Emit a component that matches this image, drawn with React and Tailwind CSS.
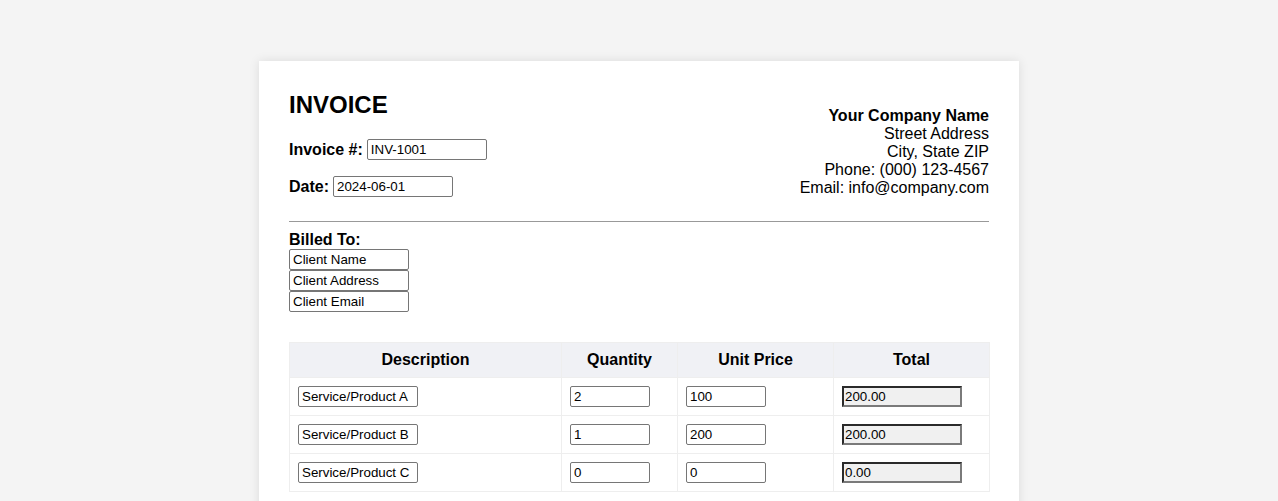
import React from "react";

const inputCls =
  "block h-[21px] border border-[#767676] rounded-[2px] bg-white px-[3px] text-[13.33px] leading-[15px] text-black outline-none";

const totalCls =
  "block h-[21px] w-[120px] border-2 border-t-[#2a2a2a] border-l-[#2a2a2a] border-b-[#7a7a7a] border-r-[#7a7a7a] bg-[#f0f0f0] px-[1px] text-[13.33px] leading-[15px] text-black outline-none";

const rows = [
  { d: "Service/Product A", q: "2", p: "100", t: "200.00" },
  { d: "Service/Product B", q: "1", p: "200", t: "200.00" },
  { d: "Service/Product C", q: "0", p: "0", t: "0.00" },
];

export default function App() {
  return (
    <div
      className="min-h-screen bg-[#f4f4f4] pt-[61px] text-black leading-[18px]"
      style={{ fontFamily: '"Liberation Sans", Arial, sans-serif' }}
    >
      <div className="mx-auto w-[760px] bg-white p-[30px] shadow-[0_0_10px_rgba(0,0,0,0.1)]">
        <div className="flex items-start justify-between">
          <div>
            <h1 className="text-[24px] font-bold leading-[28px]">INVOICE</h1>
            <div className="mt-[20px] flex items-center gap-[4px] leading-[18px]">
              <span className="text-[16px] font-bold">Invoice #:</span>
              <input className={`${inputCls} w-[120px]`} defaultValue="INV-1001" />
            </div>
            <div className="mt-[16px] flex items-center gap-[4px] leading-[18px]">
              <span className="text-[16px] font-bold">Date:</span>
              <input className={`${inputCls} w-[120px]`} defaultValue="2024-06-01" />
            </div>
          </div>
          <div className="mt-[16px] text-right text-[16px] leading-[18px]">
            <div className="font-bold">Your Company Name</div>
            <div>Street Address</div>
            <div>City, State ZIP</div>
            <div>Phone: (000) 123-4567</div>
            <div>Email: info@company.com</div>
          </div>
        </div>

        <hr className="mt-[24px] border-0 border-t border-[#999]" />

        <div className="mt-[9px]">
          <div className="text-[16px] font-bold leading-[18px]">Billed To:</div>
          <input className={`${inputCls} w-[120px]`} defaultValue="Client Name" />
          <input className={`${inputCls} w-[120px]`} defaultValue="Client Address" />
          <input className={`${inputCls} w-[120px]`} defaultValue="Client Email" />
        </div>

        <table className="mt-[30px] w-[700px] table-fixed border-collapse">
          <colgroup>
            <col className="w-[272px]" />
            <col className="w-[116px]" />
            <col className="w-[156px]" />
            <col className="w-[156px]" />
          </colgroup>
          <thead>
            <tr className="bg-[#f0f1f5]">
              <th className="border border-[#eeeeee] p-[8px] text-center text-[16px] font-bold leading-[18px]">Description</th>
              <th className="border border-[#eeeeee] p-[8px] text-center text-[16px] font-bold leading-[18px]">Quantity</th>
              <th className="border border-[#eeeeee] p-[8px] text-center text-[16px] font-bold leading-[18px]">Unit Price</th>
              <th className="border border-[#eeeeee] p-[8px] text-center text-[16px] font-bold leading-[18px]">Total</th>
            </tr>
          </thead>
          <tbody>
            {rows.map((r) => (
              <tr key={r.d}>
                <td className="border border-[#eeeeee] p-[8px]">
                  <input className={`${inputCls} w-[120px]`} defaultValue={r.d} />
                </td>
                <td className="border border-[#eeeeee] p-[8px]">
                  <input className={`${inputCls} w-[80px]`} defaultValue={r.q} />
                </td>
                <td className="border border-[#eeeeee] p-[8px]">
                  <input className={`${inputCls} w-[80px]`} defaultValue={r.p} />
                </td>
                <td className="border border-[#eeeeee] p-[8px]">
                  <input className={totalCls} readOnly defaultValue={r.t} />
                </td>
              </tr>
            ))}
          </tbody>
        </table>
      </div>
    </div>
  );
}
